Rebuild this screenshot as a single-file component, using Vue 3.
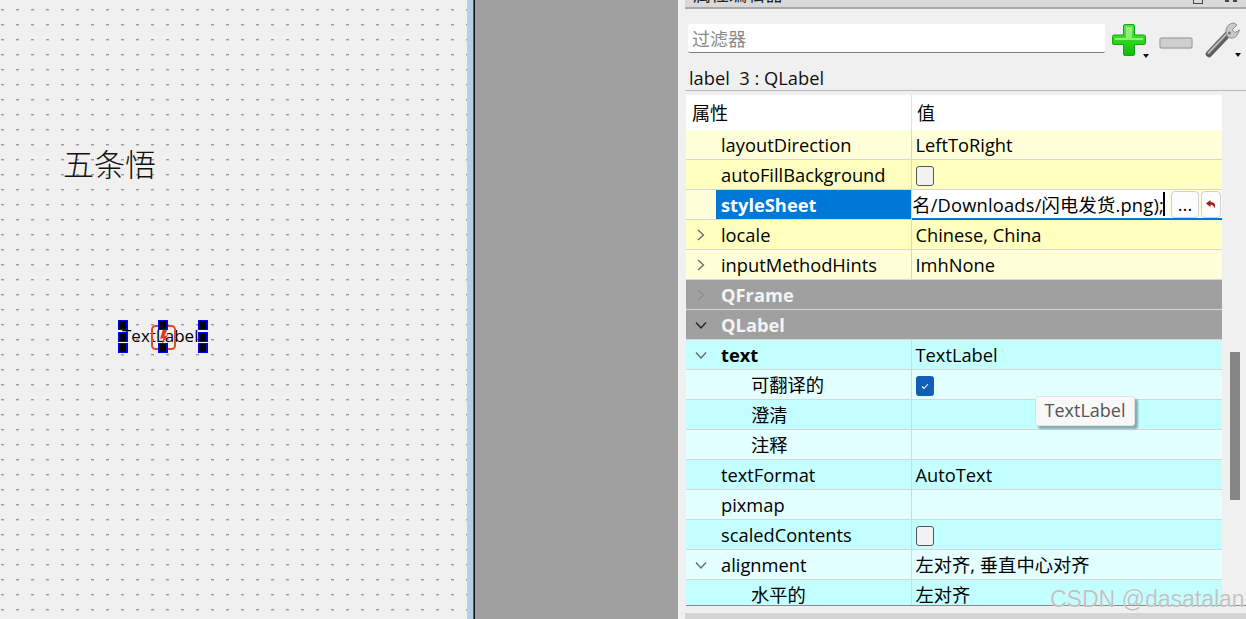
<script setup>
const rows = [
  { kind: 'prop', tone: 'y1', name: 'layoutDirection', value: 'LeftToRight' },
  { kind: 'prop', tone: 'y2', name: 'autoFillBackground', check: 'off' },
  { kind: 'edit', tone: 'y1', name: 'styleSheet' },
  { kind: 'prop', tone: 'y2', name: 'locale', value: 'Chinese, China', arrow: 'right' },
  { kind: 'prop', tone: 'y1', name: 'inputMethodHints', value: 'ImhNone', arrow: 'right' },
  { kind: 'section', name: 'QFrame', arrow: 'right' },
  { kind: 'section', name: 'QLabel', arrow: 'down' },
  { kind: 'prop', tone: 'c2', name: 'text', value: 'TextLabel', arrow: 'down', bold: true },
  { kind: 'prop', tone: 'c1', name: '可翻译的', check: 'on', child: true },
  { kind: 'prop', tone: 'c2', name: '澄清', child: true },
  { kind: 'prop', tone: 'c1', name: '注释', child: true },
  { kind: 'prop', tone: 'c2', name: 'textFormat', value: 'AutoText' },
  { kind: 'prop', tone: 'c1', name: 'pixmap' },
  { kind: 'prop', tone: 'c2', name: 'scaledContents', check: 'off' },
  { kind: 'prop', tone: 'c1', name: 'alignment', value: '左对齐, 垂直中心对齐', arrow: 'down' },
  { kind: 'prop', tone: 'c2', name: '水平的', value: '左对齐', child: true },
]
const handles = [
  [118, 320], [158, 320], [198, 320],
  [118, 332], [198, 332],
  [118, 343], [158, 343], [198, 343],
]
function rowClass(r) {
  return ['row', r.kind, r.tone, { child: r.child, bold: r.bold }]
}
</script>

<template>
  <div class="page">
    <section class="canvas">
      <svg class="dots" width="467" height="619">
        <defs>
          <pattern id="dotgrid" width="15" height="15" patternUnits="userSpaceOnUse">
            <rect x="1" y="9" width="3" height="1.4" fill="#9a9a9a" />
          </pattern>
        </defs>
        <rect width="467" height="619" fill="url(#dotgrid)" />
      </svg>
      <div class="wukong">五条悟</div>
      <div class="textlabel">TextLabel</div>
      <div class="bolt">
        <svg width="25" height="25" viewBox="0 0 25 25">
          <rect x="1" y="1" width="23" height="23" rx="3.500" fill="none" stroke="#dc4a30" stroke-width="2" />
          <path d="M12 4 L9 14 L12.500 13 L10.500 20 L17 10 L13.500 11 L16.500 4 Z" fill="#e8351a" />
        </svg>
      </div>
      <i v-for="(h, i) in handles" :key="i" class="handle" :style="{ left: h[0] + 'px', top: h[1] + 'px' }"></i>
    </section>
    <div class="splitter"></div>
    <div class="blackline"></div>
    <div class="gutter"></div>

    <aside class="panel">
      <header class="titlebar">
        <span class="title">属性编辑器</span>
        <span class="tb-float"></span>
        <span class="tb-close"></span>
      </header>
      <div class="toolbar">
        <div class="filter">过滤器</div>
        <div class="tool plus">
          <svg width="36" height="34" viewBox="0 0 36 34">
            <defs>
              <linearGradient id="gplus" x1="0" y1="0" x2="0" y2="1">
                <stop offset="0" stop-color="#5fe04a" />
                <stop offset=".55" stop-color="#2fd41f" />
                <stop offset="1" stop-color="#0fb80b" />
              </linearGradient>
            </defs>
            <path d="M13 1.500 H21 Q22.500 1.500 22.500 3 V12 H32 Q33.500 12 33.500 13.500 V20 Q33.500 21.500 32 21.500 H22.500 V31 Q22.500 32.500 21 32.500 H13 Q11.500 32.500 11.500 31 V21.500 H2 Q.500 21.500 .500 20 V13.500 Q.500 12 2 12 H11.500 V3 Q11.500 1.500 13 1.500 Z" fill="url(#gplus)" stroke="#14a80f" />
            <path d="M3 15 H14 V4 H20 V15 H31 V17 H3 Z" fill="#a8f598" opacity=".75" />
          </svg>
          <i class="tri"></i>
        </div>
        <div class="tool minus">
          <svg width="34" height="12" viewBox="0 0 34 12">
            <rect x="1" y="1" width="32" height="10" rx="1.500" fill="#cfcfcf" stroke="#a9a9a9" stroke-width="1.400" />
          </svg>
        </div>
        <div class="tool wrench">
          <svg width="36" height="36" viewBox="0 0 36 36">
            <path d="M4 32 L23 12" stroke="#5e5e5e" stroke-width="6.500" stroke-linecap="round" />
            <path d="M3.500 31 L22 11.500" stroke="#b9b9b9" stroke-width="2" stroke-linecap="round" />
            <path d="M29 1 Q22 1.500 21 8 Q20.500 12 23 15 Q28 18 32 13.500 L34.500 8 L30 10.500 L27 8 L32 3 Z" fill="#c9c9c9" stroke="#8f8f8f" />
            <circle cx="24.500" cy="11" r="1.600" fill="#7a7a7a" />
          </svg>
          <i class="tri"></i>
        </div>
      </div>
      <div class="objname">label&nbsp; 3 : QLabel</div>

      <div class="tablewrap">
        <div class="table">
          <div class="head">
            <div class="hcell">属性</div>
            <div class="hcell second">值</div>
          </div>
          <div v-for="r in rows" :key="r.name" :class="rowClass(r)">
            <template v-if="r.kind === 'section'">
              <svg class="arrow" :class="r.name === 'QFrame' ? 'dim' : 'dark'" width="12" height="12" viewBox="0 0 12 12">
                <path :d="r.arrow === 'right' ? 'M3 1 L8.500 6 L3 11' : 'M1 3.500 L6 9 L11 3.500'" fill="none" stroke-width="1.300" />
              </svg>
              <span class="secname">{{ r.name }}</span>
            </template>
            <template v-else>
              <div class="namecell">
                <svg v-if="r.arrow" class="arrow" width="12" height="12" viewBox="0 0 12 12">
                  <path :d="r.arrow === 'right' ? 'M3 1 L8.500 6 L3 11' : 'M1 3.500 L6 9 L11 3.500'" fill="none" stroke-width="1.300" />
                </svg>
                <span class="name">{{ r.name }}</span>
              </div>
              <div v-if="r.kind === 'edit'" class="valuecell editcell">
                <div class="input"><span class="inputtext">名/Downloads/闪电发货.png);</span><i class="caret"></i></div>
                <div class="btn dots3">...</div>
                <div class="btn reset">
                  <svg width="12" height="11" viewBox="0 0 12 11">
                    <path d="M5.500 1 L1 4.500 L5.500 8 V5.800 Q8.500 5.500 9.500 9.500 Q12 3.500 5.500 3 Z" fill="#a5161c" />
                  </svg>
                </div>
              </div>
              <div v-else class="valuecell">
                <span v-if="r.check" class="check" :class="r.check">
                  <svg v-if="r.check === 'on'" width="10" height="8" viewBox="0 0 10 8">
                    <path d="M2 4.500 L4 6.500 L8 2" fill="none" stroke="#fff" stroke-width="1.100" />
                  </svg>
                </span>
                <span v-else>{{ r.value }}</span>
              </div>
            </template>
          </div>
        </div>
        <div class="vscroll"><div class="thumb"></div></div>
        <div class="tooltip">TextLabel</div>
      </div>

      <div class="hscroll"></div>
      <div class="watermark">CSDN @dasatalan</div>
    </aside>
  </div>
</template>

<style scoped>
.page {
  width: 1246px;
  height: 619px;
  display: flex;
  overflow: hidden;
  background: #f0f0f0;
  font-family: "Open Sans", "Noto Sans CJK SC", sans-serif;
  font-size: 18.3px;
  color: #000;
}
.canvas {
  position: relative;
  width: 467px;
  height: 619px;
  background: #f0f0f0;
  flex: none;
}
.dots { position: absolute; left: 0; top: 0; }
.wukong {
  position: absolute;
  left: 63px;
  top: 141px;
  font-family: "Noto Sans CJK SC", sans-serif;
  font-weight: 300;
  font-size: 31px;
  line-height: 44px;
  color: #111;
}
.textlabel {
  position: absolute;
  left: 122px;
  top: 323px;
  font-size: 17px;
  line-height: 26px;
}
.bolt { position: absolute; left: 151px; top: 325px; line-height: 0; }
.handle {
  position: absolute;
  width: 10px;
  height: 10px;
  box-sizing: border-box;
  background: #000;
  border: 1px solid #0000f5;
  border-right-width: 2px;
}
.splitter { width: 6px; background: #b5cfe8; flex: none; }
.blackline { width: 2px; background: linear-gradient(to right, #1c6f86 1px, #10181e 1px); flex: none; }
.gutter { width: 203px; background: #a0a0a0; flex: none; }

.panel {
  position: relative;
  flex: 1;
  display: flex;
  flex-direction: column;
  height: 619px;
  background: #f0f0f0;
  min-width: 0;
}
.titlebar {
  position: relative;
  height: 7px;
  margin-left: 7px;
  background: #d9d9d9;
  border-bottom: 2px solid #a8a8a8;
  overflow: hidden;
  flex: none;
}
.title {
  position: absolute;
  left: 8px;
  top: -19px;
  font-size: 18px;
  line-height: 26px;
  color: #222;
}
.tb-float {
  position: absolute;
  left: 508px;
  top: -6px;
  width: 8px;
  height: 8px;
  border: 1px solid #444;
}
.tb-close {
  position: absolute;
  left: 540px;
  top: 0;
  width: 12px;
  height: 2px;
  background: linear-gradient(to right, #444 0 4px, transparent 4px 8px, #444 8px);
}
.toolbar {
  display: flex;
  align-items: flex-start;
  height: 57px;
  padding: 12px 0 0 10px;
  box-sizing: border-box;
  flex: none;
}
.filter {
  width: 417px;
  height: 29px;
  margin-top: 3px;
  box-sizing: border-box;
  background: #fff;
  border-bottom: 1px solid #808080;
  border-radius: 2px;
  color: #8a8a8a;
  font-size: 18px;
  line-height: 30px;
  padding-left: 4px;
  overflow: hidden;
}
.tool { position: relative; line-height: 0; }
.plus { margin: 2px 0 0 7px; }
.minus { margin: 16px 0 0 11px; }
.wrench { margin: 1px 0 0 12px; }
.tri {
  position: absolute;
  right: 0;
  bottom: 1px;
  border-left: 3.500px solid transparent;
  border-right: 3.500px solid transparent;
  border-top: 4px solid #111;
}
.plus .tri { right: -1px; bottom: -1px; }
.objname {
  height: 24px;
  margin-left: 7px;
  padding-left: 4px;
  border-bottom: 1px solid #b9b9b9;
  font-size: 18.300px;
  line-height: 24px;
  color: #111;
  flex: none;
}
.tablewrap {
  position: relative;
  flex: none;
  height: 510px;
  margin: 4px 0 0 8px;
  display: flex;
  overflow: hidden;
  border-bottom: 1px solid #8a8a8a;
}
.table { width: 536px; flex: none; background: #fff; }
.head {
  display: grid;
  grid-template-columns: 225px 311px;
  height: 35px;
  background: #fff;
}
.hcell {
  padding-left: 6px;
  line-height: 36px;
  font-size: 18px;
}
.hcell.second {
  border-left: 1px solid #e3e3e3;
  padding-left: 5px;
}
.row {
  display: grid;
  grid-template-columns: 225px 311px;
  height: 30px;
  box-sizing: border-box;
  border-bottom: 1px solid #d6d6d6;
  line-height: 29px;
  font-size: 18.300px;
}
.y1 { background: #ffffd9; }
.y2 { background: #ffffbf; }
.c1 { background: #e3ffff; }
.c2 { background: #c4ffff; }
.section {
  display: block;
  position: relative;
  background: #a0a0a0;
  color: #f4f4f4;
  font-weight: 700;
}
.secname { position: absolute; left: 35px; top: 0; }
.namecell {
  position: relative;
  padding-left: 35px;
  white-space: nowrap;
}
.child .namecell { padding-left: 65px; }
.bold .name { font-weight: 700; }
.edit .namecell { padding-left: 0; }
.edit .name {
  display: block;
  height: 29px;
  margin-left: 30px;
  padding-left: 5px;
  background: #0078d7;
  color: #fff;
  font-weight: 700;
}
.arrow { position: absolute; left: 9px; top: 9px; stroke: #666; }
.section .arrow.dim { stroke: #8d8d8d; }
.section .arrow.dark { stroke: #222; }
.valuecell {
  border-left: 1px solid #d6d6d6;
  padding-left: 3.500px;
  white-space: nowrap;
  display: flex;
  align-items: center;
  height: 29px;
}
.editcell {
  position: relative;
  padding-left: 1px;
  height: 30px;
  align-items: flex-start;
  background: linear-gradient(to top, #0078d7 2px, transparent 2px);
}
.input {
  position: relative;
  width: 256px;
  height: 28px;
  background: #fff;
  overflow: hidden;
  line-height: 30px;
  display: flex;
  justify-content: flex-end;
  padding-right: 5px;
  box-sizing: border-box;
}
.inputtext { white-space: nowrap; flex: none; letter-spacing: .2px; }
.caret {
  position: absolute;
  right: 4px;
  top: 2px;
  width: 2px;
  height: 24px;
  background: #000;
}
.btn {
  height: 27px;
  background: #fdfdfd;
  border: 1px solid #d0d0d0;
  border-radius: 4px;
  box-sizing: border-box;
  margin-top: 1px;
  display: flex;
  align-items: center;
  justify-content: center;
}
.dots3 { width: 28px; margin-left: 2px; line-height: 20px; padding-bottom: 2px; }
.reset { width: 20px; margin-left: 2px; }
.check {
  width: 18px;
  height: 20px;
  margin-left: 0;
  margin-top: 3px;
  box-sizing: border-box;
  border-radius: 3px;
  display: flex;
  align-items: center;
  justify-content: center;
}
.check.off { background: #f2f2f2; border: 1px solid #555; }
.check.on { background: #0f5fb8; }
.vscroll {
  position: relative;
  width: 24px;
  flex: none;
  background: #f0f0f0;
}
.thumb {
  position: absolute;
  left: 8px;
  top: 257px;
  width: 10px;
  height: 148px;
  background: #858585;
}
.tooltip {
  position: absolute;
  left: 349px;
  top: 301px;
  width: 100px;
  height: 30px;
  box-sizing: border-box;
  background: #f8f8f8;
  border: 1px solid #e2e2e2;
  border-radius: 3px;
  box-shadow: 3px 3px 2px rgba(80, 110, 110, .55);
  color: #555;
  font-size: 18px;
  line-height: 26px;
  text-align: center;
}
.hscroll {
  height: 6px;
  margin: 7px 0 0 7px;
  background: #d4d4d4;
  flex: none;
}
.watermark {
  position: absolute;
  left: 372px;
  top: 586px;
  font-family: "Liberation Sans", sans-serif;
  font-size: 23px;
  line-height: 26px;
  color: rgba(175, 175, 175, .75);
  text-shadow: 0 0 1px #fff;
  white-space: nowrap;
}
</style>
